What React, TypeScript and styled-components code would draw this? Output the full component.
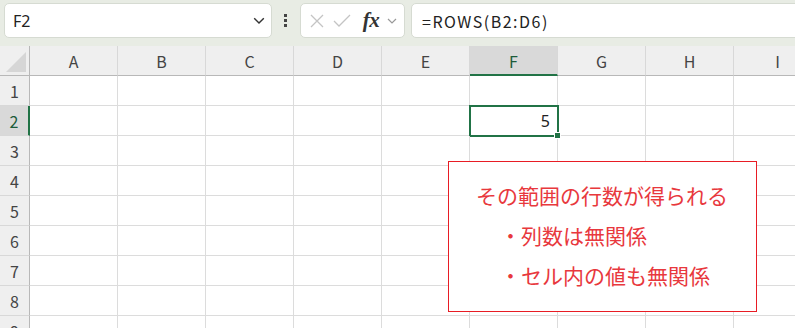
import React, { FC, ReactElement } from "react";
import styled, { createGlobalStyle } from "styled-components";

const COLUMNS = ["A", "B", "C", "D", "E", "F", "G", "H", "I"];
const ROWS = [1, 2, 3, 4, 5, 6, 7, 8, 9];
const ACTIVE_COL = "F";
const ACTIVE_ROW = 2;
const GREEN = "#217346";

const GlobalStyle = createGlobalStyle`
  html, body {
    margin: 0;
    padding: 0;
    background: #ffffff;
    overflow: hidden;
  }
  body {
    font-family: "Noto Sans CJK JP", "Noto Sans", sans-serif;
  }
`;

const Page = styled.div`
  width: 795px;
  height: 328px;
  overflow: hidden;
  position: relative;
  background: #ffffff;
`;

/* formula bar */
const TopBar = styled.div`
  height: 46px;
  box-sizing: border-box;
  padding: 3px 0 8px 4px;
  background: #e8ece4;
  display: flex;
  align-items: stretch;
  overflow: hidden;
`;

const Field = styled.div`
  background: #ffffff;
  border: 1px solid #d6dbd2;
  border-radius: 5px;
  box-sizing: border-box;
  display: flex;
  align-items: center;
`;

const NameBox = styled(Field)`
  width: 268px;
  padding: 0 6px 0 8px;
  justify-content: space-between;
  font-family: "Noto Sans", "Liberation Sans", sans-serif;
  font-size: 16px;
  color: #222;
`;

const Dots = styled.div`
  width: 27px;
  display: flex;
  flex-direction: column;
  align-items: center;
  justify-content: center;
  gap: 2px;
  padding-right: 1px;
`;

const Dot = styled.span`
  width: 3px;
  height: 3px;
  background: #444;
`;

const ButtonsBox = styled(Field)`
  width: 105px;
  padding: 0 0 0 6px;
`;

const IconSlot = styled.div<{ w: number }>`
  width: ${(p) => p.w}px;
  display: flex;
  align-items: center;
  justify-content: center;
`;

const Fx = styled.span`
  font-family: "Liberation Serif", "DejaVu Serif", serif;
  font-style: italic;
  font-weight: bold;
  font-size: 21px;
  color: #333;
  letter-spacing: -0.5px;
`;

const FormulaBox = styled(Field)`
  flex: 1;
  margin-left: 6px;
  margin-right: -10px;
  padding-left: 10px;
  font-family: "Noto Sans CJK JP", sans-serif;
  font-size: 16px;
  letter-spacing: 1.5px;
  color: #222;
`;

/* sheet */
const Sheet = styled.div`
  display: grid;
  grid-template-columns: 30px repeat(9, 88px);
  grid-auto-rows: 30px;
`;

const Corner = styled.div`
  background: #efefef;
  border-right: 1px solid #b8b8b8;
  border-bottom: 1px solid #b8b8b8;
  box-sizing: border-box;
  display: flex;
  align-items: flex-end;
  justify-content: flex-end;
  padding: 0 3px 3px 0;
`;

const ColHeader = styled.div<{ active?: boolean }>`
  box-sizing: border-box;
  background: ${(p) => (p.active ? "#d9d9d9" : "#efefef")};
  border-right: 1px solid #d8d8d8;
  border-bottom: ${(p) => (p.active ? `2px solid ${GREEN}` : "1px solid #b8b8b8")};
  display: flex;
  align-items: center;
  justify-content: center;
  font-size: 16px;
  color: ${(p) => (p.active ? "#1d5c3a" : "#444")};
  padding-top: ${(p) => (p.active ? "1px" : "0")};
`;

const RowHeader = styled.div<{ active?: boolean }>`
  box-sizing: border-box;
  background: ${(p) => (p.active ? "#d9d9d9" : "#efefef")};
  border-bottom: 1px solid #d8d8d8;
  border-right: ${(p) => (p.active ? `2px solid ${GREEN}` : "1px solid #b8b8b8")};
  display: flex;
  align-items: center;
  justify-content: center;
  font-size: 16px;
  color: ${(p) => (p.active ? "#1d5c3a" : "#444")};
`;

const Cell = styled.div<{ selected?: boolean }>`
  box-sizing: border-box;
  border-right: 1px solid #dcdcdc;
  border-bottom: 1px solid #dcdcdc;
  position: relative;
  display: flex;
  align-items: center;
  justify-content: flex-end;
  padding-right: 7px;
  font-size: 16px;
  color: #222;
  font-family: "Noto Sans", sans-serif;

  ${(p) =>
    p.selected &&
    `
    &::before {
      content: "";
      position: absolute;
      left: -1px;
      top: -1px;
      right: -2px;
      bottom: -2px;
      border: 2px solid ${GREEN};
    }
    &::after {
      content: "";
      position: absolute;
      right: -4px;
      bottom: -4px;
      width: 5px;
      height: 5px;
      background: ${GREEN};
      border: 1px solid #ffffff;
      z-index: 2;
    }
  `}
`;

/* callout */
const Note = styled.div`
  position: absolute;
  left: 448px;
  top: 161px;
  width: 309px;
  height: 151px;
  box-sizing: border-box;
  border: 1px solid #e81c24;
  background: #ffffff;
  padding: 13px 0 0 27px;
  font-family: "Noto Sans CJK JP", sans-serif;
  font-size: 21px;
  color: #e8383d;
  line-height: 40px;
`;

const Bullet = styled.div`
  padding-left: 24px;
`;

const Chevron: FC<{ size: number; color: string }> = ({ size, color }) => (
  <svg width={size} height={size * 0.6} viewBox="0 0 10 6">
    <path d="M1 1 L5 5 L9 1" fill="none" stroke={color} strokeWidth="1.2" />
  </svg>
);

const App: FC = (): ReactElement => {
  return (
    <Page>
      <GlobalStyle />
      <TopBar>
        <NameBox>
          <span>F2</span>
          <Chevron size={12} color="#333" />
        </NameBox>
        <Dots>
          <Dot />
          <Dot />
          <Dot />
        </Dots>
        <ButtonsBox>
          <IconSlot w={20}>
            <svg width="16" height="16" viewBox="0 0 16 16">
              <path d="M2 2 L14 14 M14 2 L2 14" stroke="#c4c4c4" strokeWidth="1.3" fill="none" />
            </svg>
          </IconSlot>
          <IconSlot w={30}>
            <svg width="20" height="16" viewBox="0 0 20 16">
              <path d="M2 8 L7 13 L18 2" stroke="#c4c4c4" strokeWidth="1.3" fill="none" />
            </svg>
          </IconSlot>
          <IconSlot w={28}>
            <Fx>fx</Fx>
          </IconSlot>
          <IconSlot w={14}>
            <Chevron size={10} color="#999" />
          </IconSlot>
        </ButtonsBox>
        <FormulaBox>=ROWS(B2:D6)</FormulaBox>
      </TopBar>

      <Sheet>
        <Corner>
          <svg width="20" height="20" viewBox="0 0 20 20">
            <path d="M20 0 L20 20 L0 20 Z" fill="#d6d6d6" />
          </svg>
        </Corner>
        {COLUMNS.map((c) => (
          <ColHeader key={c} active={c === ACTIVE_COL}>
            {c}
          </ColHeader>
        ))}
        {ROWS.map((r) => (
          <React.Fragment key={r}>
            <RowHeader active={r === ACTIVE_ROW}>{r}</RowHeader>
            {COLUMNS.map((c) => {
              const selected = c === ACTIVE_COL && r === ACTIVE_ROW;
              return (
                <Cell key={c} selected={selected}>
                  {selected ? "5" : ""}
                </Cell>
              );
            })}
          </React.Fragment>
        ))}
      </Sheet>

      <Note>
        <div>その範囲の行数が得られる</div>
        <Bullet>・列数は無関係</Bullet>
        <Bullet>・セル内の値も無関係</Bullet>
      </Note>
    </Page>
  );
};

export default App;
